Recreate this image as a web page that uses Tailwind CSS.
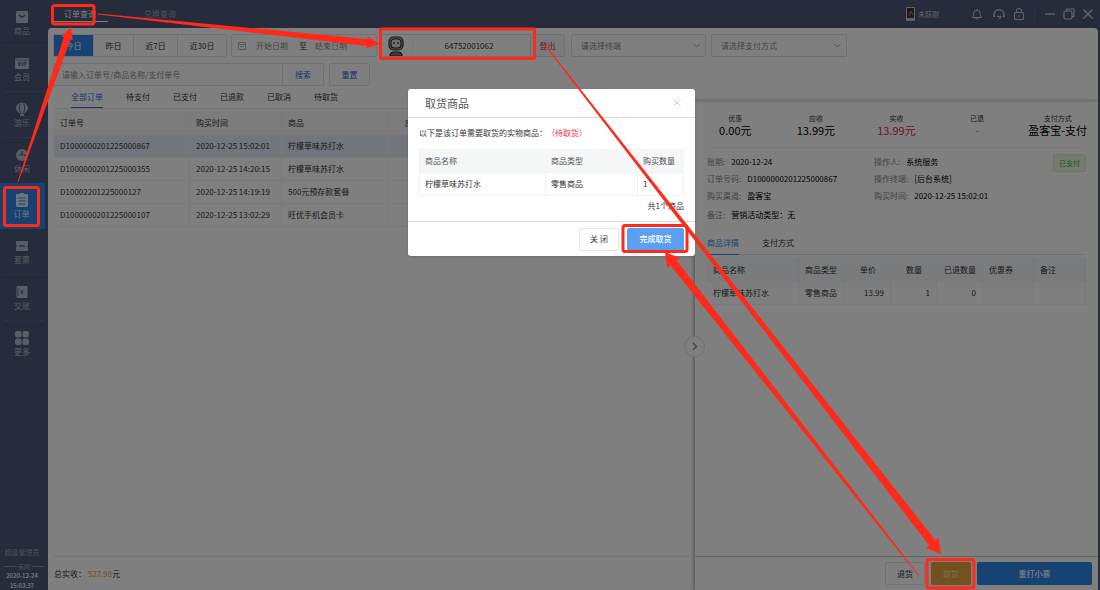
<!DOCTYPE html>
<html lang="zh-CN">
<head>
<meta charset="utf-8">
<title>订单查询</title>
<script src="https://cdn.jsdelivr.net/npm/@tailwindcss/browser@4"></script>
</head>
<body class="relative h-screen overflow-hidden bg-[#4c5878] font-['Noto_Sans_CJK_SC',sans-serif] text-[8px] leading-3 text-[#333]">
<div class="flex h-screen">
  <!-- Sidebar -->
  <nav class="flex h-screen w-12 shrink-0 flex-col overflow-hidden text-[#b4bbcc]">
    <a href="#" class="mx-1 flex h-[46px] shrink-0 flex-col items-center justify-center border-b border-[#5b6787] pr-1">
      <svg class="size-4" viewBox="0 0 16 16"><rect x="2" y="2" width="12" height="12" rx="1" fill="currentColor"/><path d="M5 6q3 3.500 6 0" fill="none" stroke="#4c5878" stroke-width="1.300"/></svg>商品</a>
    <a href="#" class="mx-1 flex h-[46px] shrink-0 flex-col items-center justify-center border-b border-[#5b6787] pr-1">
      <svg class="size-4" viewBox="0 0 16 16"><rect x="1" y="3" width="14" height="11" rx="1" fill="currentColor"/><path d="M4 7l1.200 4L6.500 7M8 7v4M10 11V7h2v2h-2" fill="none" stroke="#4c5878" stroke-width=".9"/><path d="M1 5h14" stroke="#4c5878" stroke-width=".6"/></svg>会员</a>
    <a href="#" class="mx-1 flex h-[46px] shrink-0 flex-col items-center justify-center border-b border-[#5b6787] pr-1">
      <svg class="size-4" viewBox="0 0 16 16"><path d="M8 1.500a6 6 0 0 1 6 5.500c0 2.500-2 4.500-4 5.500H6C4 11.500 2 9.500 2 7a6 6 0 0 1 6-5.500zM6 13h4v2H6z" fill="currentColor"/><path d="M6.200 2.500q-1.800 5 .2 10M9.800 2.500q1.800 5-.2 10" fill="none" stroke="#4c5878"/></svg>游乐</a>
    <a href="#" class="mx-1 flex h-[45px] shrink-0 flex-col items-center justify-center pr-1">
      <svg class="size-4" viewBox="0 0 16 16"><circle cx="8" cy="8" r="6" fill="currentColor"/><path d="M8 4v4H4.500M9.500 7.500L12 9" fill="none" stroke="#4c5878" stroke-width="1.200"/></svg>休闲</a>
    <a href="#" class="mr-[3px] flex h-[46px] shrink-0 flex-col items-center justify-center bg-[#2f86e6] pr-[2px] text-[#dfe9f8]">
      <svg class="size-4" viewBox="0 0 16 16"><rect x="2" y="2" width="12" height="13" rx="1" fill="currentColor"/><path d="M4.500 6h7M4.500 9h7M4.500 12h7" stroke="#2f86e6"/><path d="M6 1h4v3H6z" fill="currentColor"/></svg>订单</a>
    <a href="#" class="mx-1 flex h-[46px] shrink-0 flex-col items-center justify-center border-b border-[#5b6787] pr-1">
      <svg class="size-4" viewBox="0 0 16 16"><path d="M2 3h12v3.500a1.800 1.800 0 0 0 0 3V13H2V9.500a1.800 1.800 0 0 0 0-3z" fill="currentColor"/><path d="M5 8h6" stroke="#4c5878" stroke-width="1.200"/></svg>套票</a>
    <a href="#" class="mx-1 flex h-[46px] shrink-0 flex-col items-center justify-center border-b border-[#5b6787] pr-1">
      <svg class="size-4" viewBox="0 0 16 16"><rect x="2.500" y="2" width="11" height="12" rx="1" fill="currentColor"/><path d="M6.500 5.500L8 8l1.500-2.500M8 8v3M6.500 8.500h3M4 4v8" fill="none" stroke="#4c5878" stroke-width=".8"/></svg>交账</a>
    <a href="#" class="mx-1 flex h-[46px] shrink-0 flex-col items-center justify-center pr-1">
      <svg class="size-4" viewBox="0 0 16 16" fill="currentColor"><rect x="1" y="1" width="6.500" height="6.500" rx="2"/><rect x="8.500" y="1" width="6.500" height="6.500" rx="2"/><rect x="1" y="8.500" width="6.500" height="6.500" rx="2"/><rect x="8.500" y="8.500" width="6.500" height="6.500" rx="2"/></svg>更多</a>
    <div class="mt-auto flex h-11 shrink-0 flex-col pr-1 text-center text-[7px]">
      <span class="text-[#98a1b7]">超级管理员</span>
      <span class="mt-1 flex h-[9px] shrink-0 items-center gap-px text-[6px] text-[#98a1b7]"><i class="ml-1 h-px flex-1 bg-[#8089a2]"></i>有网<i class="h-px flex-1 bg-[#8089a2]"></i></span>
      <span class="text-[6px] leading-[10px] font-medium text-white">2020-12-24</span>
      <span class="shrink-0 text-[6px] leading-[9px] font-medium text-white">15:03:37</span>
    </div>
  </nav>

  <div class="flex min-w-0 flex-1 flex-col pr-[2px]">
    <!-- Title bar -->
    <header class="flex h-7 shrink-0 items-center pl-1 text-[#98a1b7]">
      <a href="#" class="mr-6 flex h-4 w-14 items-center justify-center border-b border-white text-white">订单查询</a>
      <a href="#" class="flex h-4 w-14 items-center justify-center">兑换查询</a>
      <div class="ml-auto flex items-center text-[#c3c9d8]">
        <svg class="mr-[3px] h-[14px] w-[9px]" viewBox="0 0 9 14"><rect width="9" height="14" rx="1" fill="#c8c8cc"/><rect x="1" y="1" width="7" height="10" fill="#3c3432"/><path d="M3 9l2-5 2 4" fill="none" stroke="#a08070"/></svg>
        <span class="mr-[32px] text-[7px]">未跃刚</span>
        <button class="mr-[10px]" aria-label="通知"><svg class="size-3" viewBox="0 0 12 12" fill="none" stroke="currentColor"><path d="M1.500 9.500c1-1 1.200-2 1.200-4a3.300 3.300 0 0 1 6.600 0c0 2 .2 3 1.200 4zM4.500 11h3M6 1v1"/></svg></button>
        <button class="mr-2" aria-label="客服"><svg class="size-3" viewBox="0 0 12 12" fill="none" stroke="currentColor" stroke-width="1.200"><path d="M1.500 8A4.800 4.800 0 1 1 10.500 8M.8 6.500v2h1.500M11.200 6.500v2H9.700M4 8q2 1.500 4 0M8 8.500l-1.500 2.500"/></svg></button>
        <button aria-label="锁屏"><svg class="size-3" viewBox="0 0 12 12" fill="none" stroke="currentColor" stroke-width="1.100"><rect x="1.500" y="4.500" width="9" height="7" rx="1"/><path d="M3.500 4.500V3a2.500 2.500 0 0 1 5 0v1.500M6 7v2"/></svg></button>
        <i class="ml-[9px] mr-[9px] h-4 w-px bg-[#5b6787]"></i>
        <button class="mr-[7px]" aria-label="最小化"><svg class="size-3" viewBox="0 0 12 12" stroke="currentColor" stroke-width="1.300"><path d="M1 6h10"/></svg></button>
        <button class="mr-[7px]" aria-label="还原"><svg class="size-3" viewBox="0 0 12 12" fill="none" stroke="currentColor" stroke-width="1.200"><rect x="1" y="3" width="8" height="8" rx="1.500"/><path d="M3.500 3V1H11v7.500H9"/></svg></button>
        <button class="mr-1" aria-label="关闭窗口"><svg class="size-3" viewBox="0 0 12 12" stroke="currentColor" stroke-width="1.500"><path d="M1.500 1.500l9 9M10.500 1.500l-9 9"/></svg></button>
      </div>
    </header>

    <main class="flex min-h-0 flex-1 flex-col rounded-t-[4px] bg-white">
      <!-- Filters -->
      <div class="flex h-[29px] shrink-0 items-end pl-[5px]">
        <div class="flex h-[23px] divide-x divide-[#dfe2e8] rounded-[2px] border border-[#dfe2e8]">
          <button class="w-10 bg-[#2f86e6] text-white">今日</button>
          <button class="w-10">昨日</button>
          <button class="w-11">近7日</button>
          <button class="w-[48px]">近30日</button>
        </div>
        <div class="ml-1 flex h-[23px] w-[146px] items-center rounded-[2px] border border-[#dfe2e8] pl-[6px]">
          <svg class="mr-[10px] size-2 text-[#a0a4ac]" viewBox="0 0 8 8" fill="none" stroke="currentColor" stroke-width=".8"><path d="M.5.500h7v7h-7zM.5 2.500h7M2 4.500h4"/></svg>
          <input aria-label="开始日期" placeholder="开始日期" class="w-[36px] placeholder:text-[#8c8c8c]">
          <span class="mx-[7px]">至</span>
          <input aria-label="结束日期" placeholder="结束日期" class="ml-px w-[40px] placeholder:text-[#8c8c8c]">
        </div>
        <div class="ml-[2px] flex h-[23px] w-[186px] items-center rounded-[2px] border border-[#dfe2e8]">
          <span class="flex w-8 justify-center self-end">
            <svg class="h-5 w-[18px]" viewBox="0 0 18 20" fill="none" stroke="#222" stroke-width="1.100"><rect x="2" y="1" width="14" height="13" rx="4.500" fill="#bbb"/><rect x="4" y="3" width="10" height="9" rx="3" fill="#ddd"/><path d="M7 6v2M11 6v2"/><path d="M3 20q0-4 4-4h4q4 0 4 4z" fill="#777"/></svg>
          </span>
          <input aria-label="会员手机号" value="64752001062" class="min-w-0 flex-1 border-l border-[#eef0f4] pr-[5px] text-center">
          <button class="h-full w-[34px] border-l border-[#dfe2e8] bg-[#f5f7fa] text-[#e0304a]">登出</button>
        </div>
        <label class="relative ml-[6px] flex h-[23px] w-[135px]">
          <select aria-label="终端" class="w-full appearance-none rounded-[2px] border border-[#dfe2e8] pl-[9px] text-[#888]"><option>请选择终端</option></select>
          <svg class="pointer-events-none absolute right-[6px] top-2 size-[7px]" viewBox="0 0 7 7" fill="none" stroke="#aaa"><path d="M.5 2l3 3 3-3"/></svg>
        </label>
        <label class="relative ml-[5px] flex h-[23px] w-[136px]">
          <select aria-label="支付方式" class="w-full appearance-none rounded-[2px] border border-[#dfe2e8] pl-[9px] text-[#888]"><option>请选择支付方式</option></select>
          <svg class="pointer-events-none absolute right-[6px] top-2 size-[7px]" viewBox="0 0 7 7" fill="none" stroke="#aaa"><path d="M.5 2l3 3 3-3"/></svg>
        </label>
      </div>
      <div class="flex h-[29px] shrink-0 items-end pl-[5px]">
        <input aria-label="搜索订单" placeholder="请输入订单号/商品名称/支付单号" class="h-[23px] w-[230px] rounded-l-[2px] border border-[#dfe2e8] pl-2 placeholder:text-[#8c8c8c]">
        <button class="mr-[5px] h-[23px] w-[41px] rounded-r-[2px] border border-l-0 border-[#dfe2e8] text-[#2a6fd0]">搜索</button>
        <button class="h-[23px] w-[41px] rounded-[2px] border border-[#dfe2e8] text-[#2a6fd0]">重置</button>
      </div>

      <div class="flex min-h-0 flex-1">
        <!-- Order list -->
        <section class="flex min-w-0 flex-1 flex-col">
          <div class="mx-[6px] flex h-[23px] shrink-0 items-end gap-[15px] border-b border-[#e4e7ed] pl-[17px]">
            <a href="#" class="mr-2 h-[17px] border-b border-[#2f6fe0] text-[#2f6fe0]">全部订单</a>
            <a href="#" class="mr-2 h-[17px]">待支付</a>
            <a href="#" class="mr-2 h-[17px]">已支付</a>
            <a href="#" class="mr-2 h-[17px]">已退款</a>
            <a href="#" class="mr-2 h-[17px]">已取消</a>
            <a href="#" class="h-[17px]">待取货</a>
          </div>
          <div class="mt-[2px] min-h-0 flex-1 pl-[6px] pr-1">
            <table class="w-full table-fixed border-separate border-spacing-0 text-left [&_td]:h-[23px] [&_td]:border-b [&_td]:border-r [&_td]:border-[#f0f2f7] [&_td]:px-[6px] [&_th]:h-[24px] [&_th]:border-r [&_th]:border-[#f0f2f7] [&_th]:bg-[#f8f9fb] [&_th]:px-[6px] [&_th]:font-normal">
              <thead><tr><th class="w-[136px]">订单号</th><th class="w-[92px]">购买时间</th><th class="w-[107px]">商品</th><th class="pl-4!">应收</th></tr></thead>
              <tbody>
                <tr class="bg-[#e4eaf8]"><td>D1000000201225000867</td><td>2020-12-25 15:02:01</td><td>柠檬草味苏打水</td><td></td></tr>
                <tr><td>D1000000201225000355</td><td>2020-12-25 14:20:15</td><td>柠檬草味苏打水</td><td></td></tr>
                <tr><td>D10002201225000127</td><td>2020-12-25 14:19:19</td><td>500元预存款套餐</td><td></td></tr>
                <tr><td>D1000000201225000107</td><td>2020-12-25 13:02:29</td><td>旺优手机会员卡</td><td></td></tr>
              </tbody>
            </table>
          </div>
          <footer class="mx-[6px] flex h-[34px] shrink-0 items-center border-t border-[#e4e7ed]">总实收：<span class="text-[#f59a23]">&nbsp;527.98</span>元</footer>
        </section>

        <!-- Order detail -->
        <aside class="relative mt-[14px] flex w-[403px] shrink-0 flex-col border-t-2 border-[#e2e2e2] pl-3 pr-3 shadow-[-2px_0_3px_#bbb]">
          <button class="absolute -left-[11px] top-[234px] flex size-[21px] items-center justify-center rounded-full border border-[#e0e0e0] bg-white" aria-label="收起">
            <svg class="size-[9px]" viewBox="0 0 9 9" fill="none" stroke="#777" stroke-width="1.200"><path d="M3 1l3.500 3.500L3 8"/></svg>
          </button>
          <dl class="-mx-3 grid h-[45px] shrink-0 grid-cols-5 pt-[10px] text-center whitespace-nowrap [&_dd]:text-[11px] [&_dd]:text-black [&_dt]:text-[7px]">
            <div><dt>优惠</dt><dd>0.00元</dd></div>
            <div><dt>应收</dt><dd>13.99元</dd></div>
            <div><dt>实收</dt><dd class="text-[#e0304a]!">13.99元</dd></div>
            <div><dt>已退</dt><dd class="text-[#e08a20]!">-</dd></div>
            <div><dt>支付方式</dt><dd>盈客宝-支付</dd></div>
          </dl>
          <div class="flex shrink-0 items-start border-t border-[#f0f2f7] pt-[6px]">
            <dl class="grid flex-1 grid-cols-[167px_1fr] gap-y-[5px] pt-[2px] [&_dd]:text-black [&_div]:flex [&_div]:gap-[6px] [&_dt]:text-[#888]">
              <div><dt>账期:</dt><dd>2020-12-24</dd></div><div><dt>操作人:</dt><dd>系统服务</dd></div>
              <div><dt>订单号码:</dt><dd>D1000000201225000867</dd></div><div><dt>操作终端:</dt><dd>[后台系统]</dd></div>
              <div><dt>购买渠道:</dt><dd>盈客宝</dd></div><div><dt>购买时间:</dt><dd>2020-12-25 15:02:01</dd></div>
              <div class="pt-[2px]"><dt>备注:</dt><dd>营销活动类型：无</dd></div>
            </dl>
            <span class="h-[18px] w-[33px] rounded-[2px] border border-[#d8f0cc] bg-[#e8f7e0] text-center text-[7px] leading-[17px] text-[#3fae29]">已支付</span>
          </div>
          <div class="mt-4 flex h-[18px] shrink-0 gap-[23px] border-b border-[#e4e7ed]">
            <a href="#" class="h-[18px] border-b border-[#2f86e6] text-[#2f86e6]">商品详情</a>
            <a href="#">支付方式</a>
          </div>
          <div class="mt-[3px] min-h-0 flex-1">
            <table class="w-full table-fixed border-separate border-spacing-0 text-left [&_td]:h-[23px] [&_td]:border-b [&_td]:border-[#f0f2f7] [&_td]:px-[6px] [&_th]:h-[24px] [&_th]:border-[#ebeef5] [&_th]:bg-[#f5f7fa] [&_th]:pl-[6px] [&_th]:font-normal">
              <thead><tr><th class="w-[92px] border-r">商品名称</th><th class="w-[46px]">商品类型</th><th class="w-[46px] pr-[15px] text-right">单价</th><th class="w-[46px] pr-[15px] text-right">数量</th><th class="w-[46px] pr-[7px] text-right">已退数量</th><th class="w-[51px] border-r">优惠券</th><th class="border-r">备注</th></tr></thead>
              <tbody><tr><td class="border-r">柠檬草味苏打水</td><td class="border-r">零售商品</td><td class="border-r text-right">13.99</td><td class="border-r text-right">1</td><td class="border-r text-right">0</td><td class="border-r"></td><td class="border-r"></td></tr></tbody>
            </table>
          </div>
          <footer class="-mx-3 flex h-[34px] shrink-0 items-center justify-end gap-[6px] border-t border-[#c8c8c8] pr-[6px] [&_button]:h-[23px] [&_button]:rounded-[2px]">
            <button class="w-10 border border-[#dfe2e8]">退货</button>
            <button class="w-10 bg-[#e6a23c] text-[#f8dca8]">取货</button>
            <button class="w-[115px] bg-[#2f86e6] font-medium text-white">重打小票</button>
          </footer>
        </aside>
      </div>
    </main>
  </div>
</div>

<!-- Dialog -->
<div class="absolute inset-0 flex items-start justify-center bg-black/50 pl-[3px] pt-[89px]">
  <div role="dialog" aria-labelledby="dlg-title" class="w-[287px] rounded-[3px] bg-white shadow-sm">
    <div class="flex h-[29px] items-center justify-between border-b border-[#d8d8d8] pl-[17px] pr-[14px]">
      <h2 id="dlg-title" class="text-[11px] text-[#555]">取货商品</h2>
      <button aria-label="关闭对话框"><svg class="size-2" viewBox="0 0 8 8" stroke="#ccc"><path d="M.5.500l7 7M7.500.500l-7 7"/></svg></button>
    </div>
    <div class="px-[11px] pt-[9px]">
      <p>以下是该订单需要取货的实物商品：<span class="ml-1 text-[#f0304a]">（待取货）</span></p>
      <table class="mt-[10px] w-full table-fixed border-separate border-spacing-0 border-l border-t border-[#f0f2f7] text-left [&_td]:h-[23px] [&_td]:border-b [&_td]:border-r [&_td]:border-[#f0f2f7] [&_td]:px-[5px] [&_th]:h-[23px] [&_th]:border-b [&_th]:border-[#f0f2f7] [&_th]:bg-[#f4f6fa] [&_th]:pl-[5px] [&_th]:font-normal [&_th]:text-[#555]">
        <thead><tr><th class="w-[126px]">商品名称</th><th class="w-[92px]">商品类型</th><th>购买数量</th></tr></thead>
        <tbody><tr><td>柠檬草味苏打水</td><td>零售商品</td><td>1</td></tr></tbody>
      </table>
      <p class="py-1 text-right">共1个商品</p>
    </div>
    <div class="mt-[5px] flex h-[35px] items-center justify-end gap-2 border-t border-[#d8d8d8] pr-[11px]">
      <button class="h-[23px] w-10 rounded-[2px] border border-[#e2e5ea]">关 闭</button>
      <button class="h-[23px] w-[57px] rounded-[2px] bg-[#5a9ff0] font-medium text-white">完成取货</button>
    </div>
  </div>
</div>

<!-- Step annotations -->
<svg class="pointer-events-none absolute left-0 top-0" width="1100" height="590" viewBox="0 0 1100 590" fill="#ff2a1a">
  <g fill="none" stroke="#ff2a1a" stroke-width="3">
    <rect x="52.500" y="5.500" width="41.500" height="18.500" rx="2"/>
    <rect x="4.500" y="187.500" width="34" height="38" rx="2"/>
    <rect x="380.500" y="29" width="154" height="29.500" rx="1"/>
    <rect x="623" y="225.500" width="64" height="26" rx="2"/>
    <rect x="927" y="559.500" width="47" height="28.500" rx="2"/>
  </g>
  <path d="M17.500 182L63.800 37.300 61.400 36.500 71 27 72.800 40.300 70.400 39.500 18.500 182z"/>
  <path d="M98 14.500L366.700 46.100 366.500 48.600 380 44 367.700 36.600 367.500 39.100 98 13.500z"/>
  <path d="M544.600 45.400L929.200 545.500 926.100 547.900 941 554 938.700 538.100 935.600 540.500 545.400 44.600z"/>
  <path d="M919.400 575.700L676.700 260.500 679.900 258.100 665 252 667.300 267.900 670.500 265.500 918.600 576.300z"/>
</svg>
</body>
</html>
